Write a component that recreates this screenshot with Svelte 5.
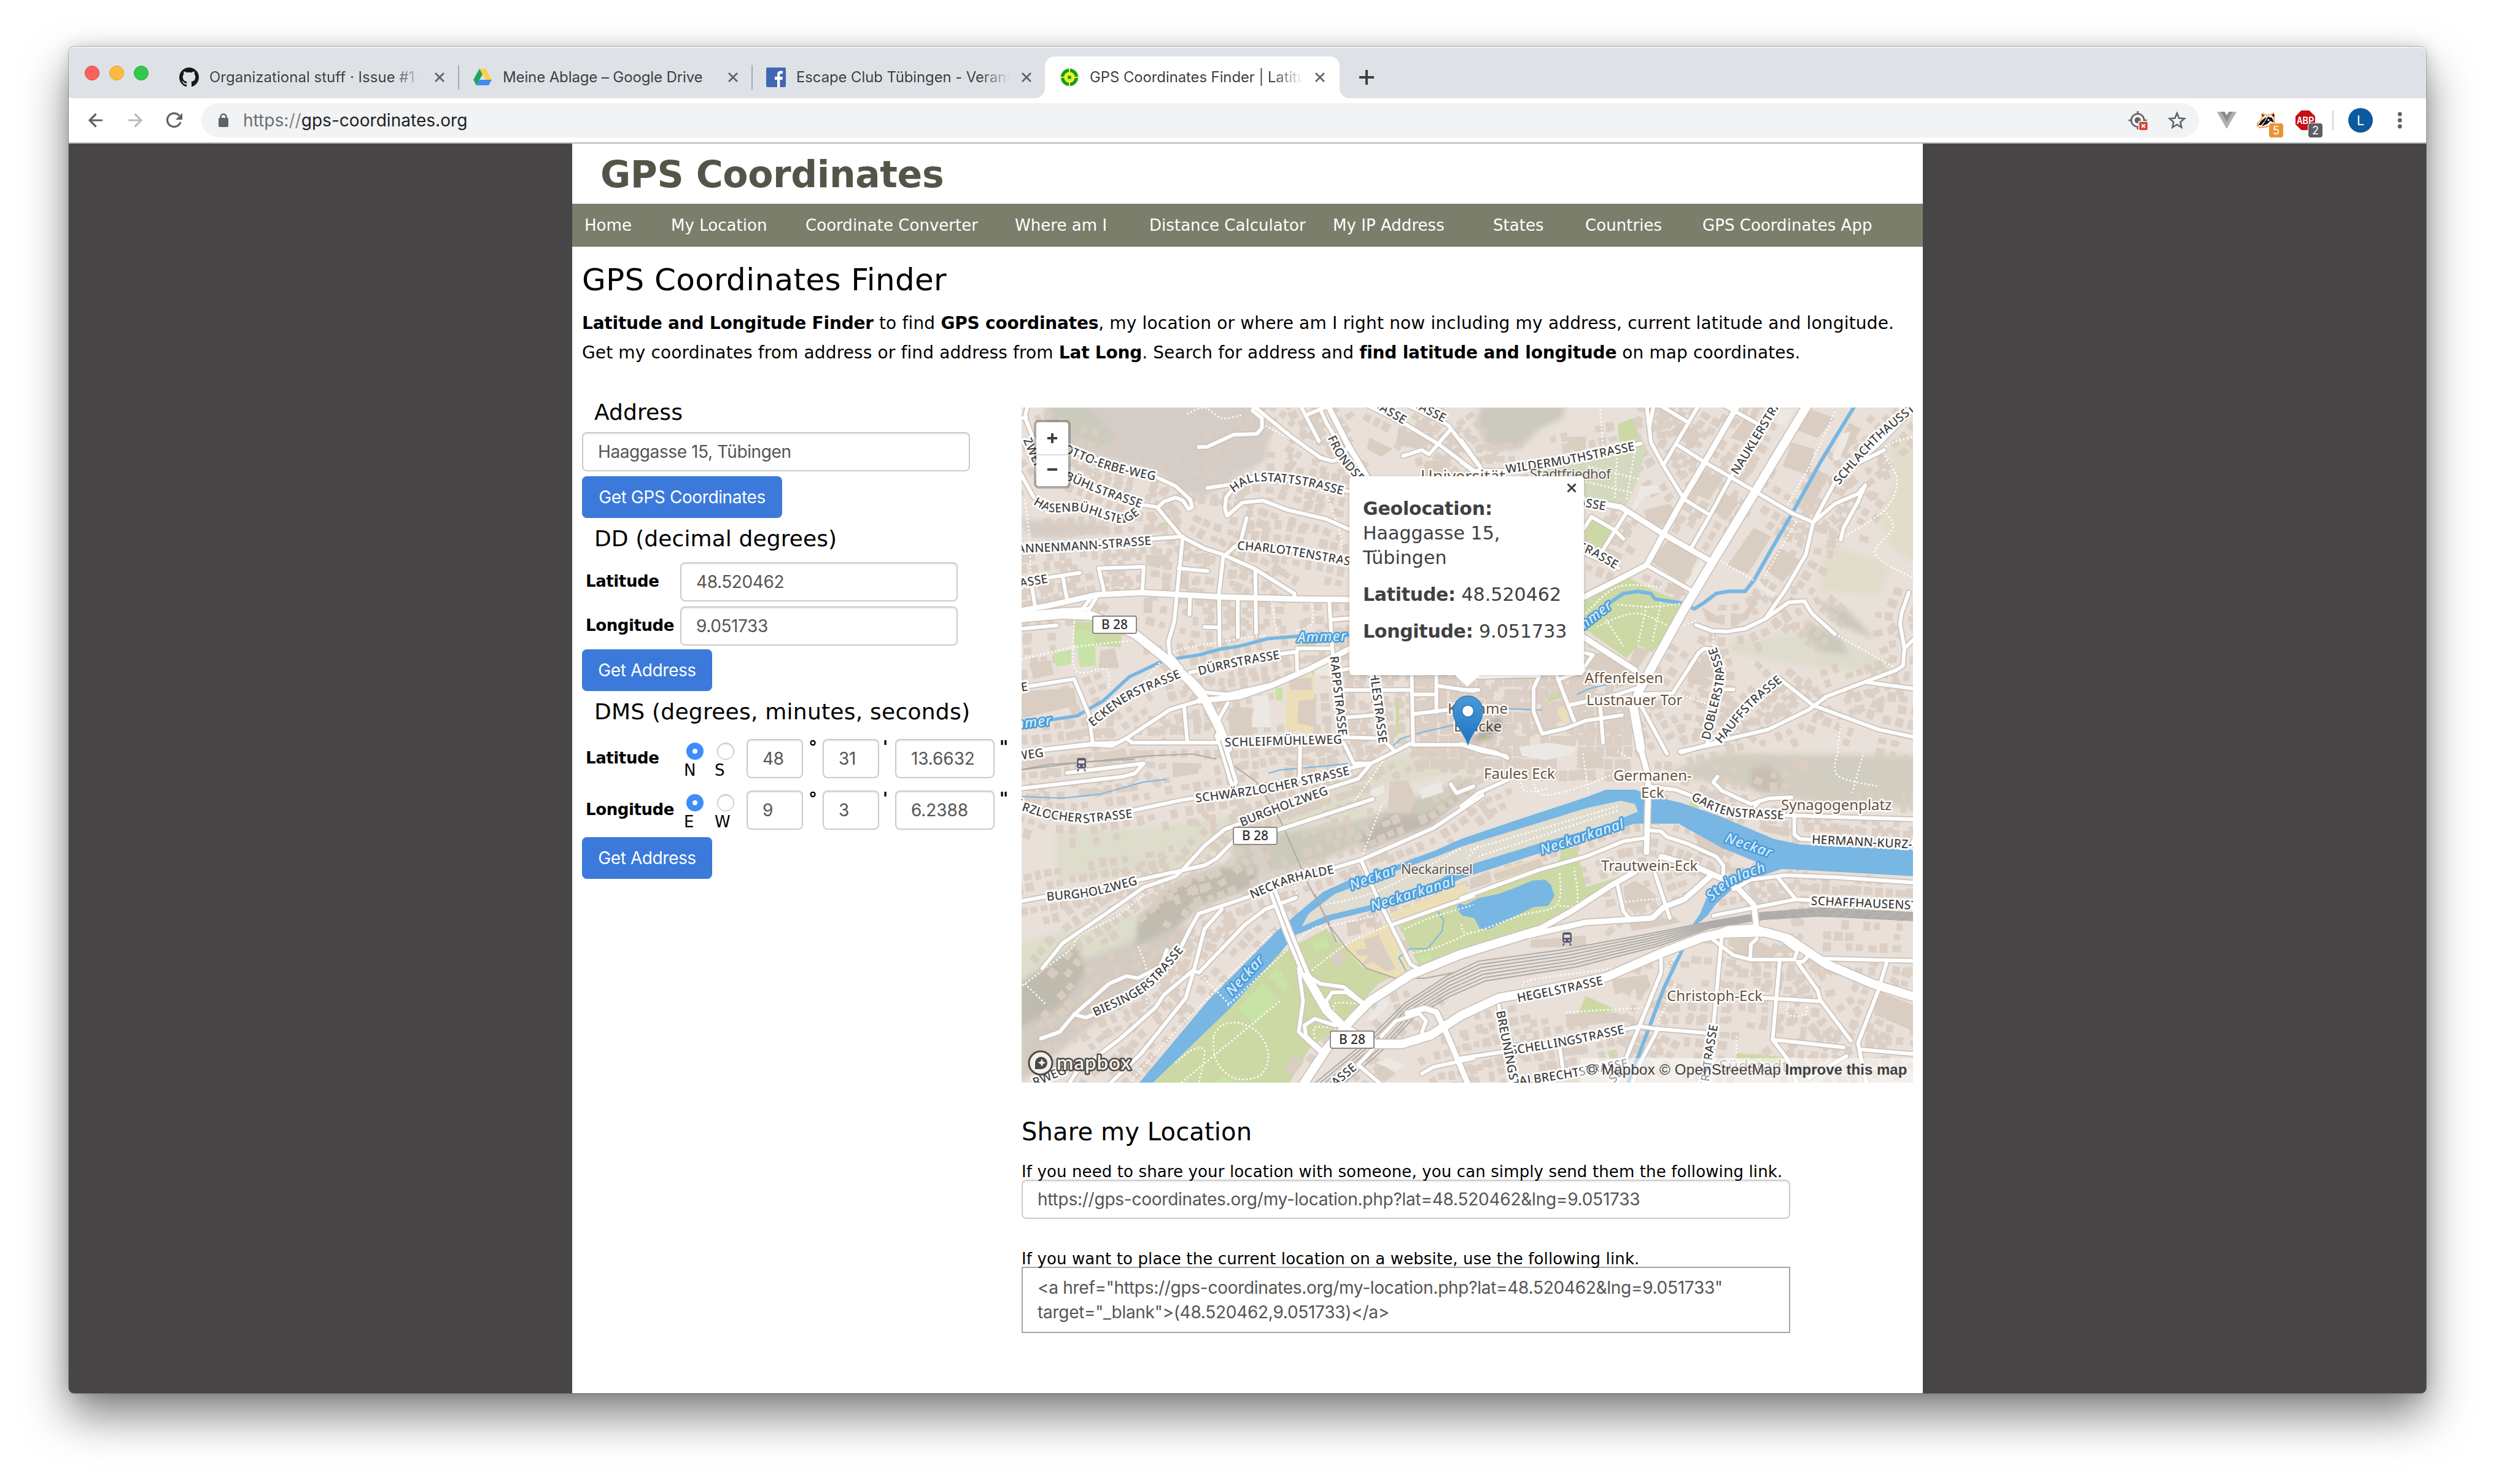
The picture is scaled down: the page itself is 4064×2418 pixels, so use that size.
<script>
  // ---------- browser chrome ----------
  const tabs = [
    { icon: 'github', title: 'Organizational stuff · Issue #1 · Lab', spaced: true },
    { icon: 'drive', title: 'Meine Ablage – Google Drive', whole: true },
    { icon: 'facebook', title: 'Escape Club Tübingen - Veranstaltungen' },
    { icon: 'gps', title: 'GPS Coordinates Finder | Latitude', active: true },
  ];
  const nav = [
    'Home', 'My Location', 'Coordinate Converter', 'Where am I', 'Distance Calculator',
    'My IP Address', 'States', 'Countries', 'GPS Coordinates App',
  ];
  const dms = [
    { label: 'Latitude', on: 'N', off: 'S', d: '48', m: '31', s: '13.6632' },
    { label: 'Longitude', on: 'E', off: 'W', d: '9', m: '3', s: '6.2388' },
  ];

  // ---------- map geometry ----------
  // Shapes are stored per map sheet (A-D); a leading letter selects the sheet
  // whose local grid the following points use.
  const W = 1452, H = 1100;
  const sheets = { A: [-4, -4], B: [716, -4], C: [-4, 546], D: [716, 546] };
  const project = (src) => {
    let o = sheets.A;
    const out = [];
    for (const tok of src.trim().split(/\s+/)) {
      if (sheets[tok]) { o = sheets[tok]; continue; }
      const [x, y] = tok.split(',').map(Number);
      out.push([+(x / 2.119 + o[0]).toFixed(1), +(y / 2.8 + o[1]).toFixed(1)]);
    }
    return out;
  };
  const line = (src) => 'M' + project(src).map((p) => p.join(' ')).join('L');
  const smooth = (p) => {
    let d = `M${p[0][0]} ${p[0][1]}`;
    for (let i = 0; i < p.length - 1; i++) {
      const a = p[i - 1] || p[i], b = p[i], c = p[i + 1], e = p[i + 2] || c;
      d += `C${b[0] + (c[0] - a[0]) / 6} ${b[1] + (c[1] - a[1]) / 6} ${c[0] - (e[0] - b[0]) / 6} ${c[1] - (e[1] - b[1]) / 6} ${c[0]} ${c[1]}`;
    }
    return d;
  };
  const curve = (src) => smooth(project(src));
  // Label baselines run on 40 units past both ends so no letter drops off.
  const baseline = (src) => {
    const p = project(src);
    const past = (a, b) => {
      const l = Math.hypot(a[0] - b[0], a[1] - b[1]);
      return [a[0] + ((a[0] - b[0]) / l) * 40, a[1] + ((a[1] - b[1]) / l) * 40];
    };
    const n = p.length;
    return `M${past(p[0], p[1]).join(' ')}L` + smooth(p).slice(1) + `L${past(p[n - 1], p[n - 2]).join(' ')}`;
  };

  const hills = [
    ['#d4ccc6', 'A 230,0 800,0 870,100 850,250 800,290 640,420 560,400 480,310 180,200 90,130 90,0'],
    ['#cbcbbd', 'A 90,0 230,0 330,140 290,190 130,120'],
    ['#d4ccc6', 'A 0,520 100,530 300,540 320,580 100,610 30,590'],
    ['#ccc9be', 'B 70,0 360,0 350,60 270,110 200,200 90,190 50,90'],
    ['#e2dccb', 'B 1600,130 1470,160 1500,350 1440,500 1480,640 1600,760'],
    ['#e2dccb', 'B 1260,640 1480,720 1450,860 1240,850'],
    ['#dedccc', 'B 930,1080 1200,1040 1290,1060 1500,1190 1450,1220 1180,1190 930,1130'],
    ['#cbc9bc', 'B 1230,890 1330,930 1430,1070 1300,1000'],
    ['#cbc9bc', 'B 1190,980 1310,1060 1340,1135 1250,1130 1190,1060'],
    ['#dedccb', 'C 130,400 420,390 860,320 1300,60 1568,30 1568,120 1270,200 1180,330 740,440 600,560 400,600 130,630'],
    ['#cbcabb', 'C 740,440 860,420 1180,350 1568,150 1568,240 1180,460 1000,560 850,600 740,560'],
    ['#c0b9b0', 'C 1180,430 1270,330 1400,330 1600,180 1420,380 1180,500'],
    ['#ddddca', 'C 0,920 400,770 400,930 100,1080 0,1120'],
    ['#d3cbc2', 'C 0,1100 400,900 590,830 560,960 300,1240 100,1450 0,1551'],
    ['#c0bdb0', 'C 540,640 700,560 820,580 830,650 620,750 550,840 400,930 410,800'],
    ['#bfbcaf', 'C 0,1100 200,920 230,1050 150,1200 0,1300'],
    ['#d1cdc0', 'D 670,150 900,50 1600,60 1600,300 1200,270 900,180'],
    ['#c9beb4', 'D 1000,120 1060,105 1105,160 1095,220 1050,235 1000,210'],
  ];
  const greens = [
    ['#cdd9a5', 'A 190,990 255,990 355,1040 350,1105 190,1090'],
    ['#c7e4a6', 'A 190,1030 260,1030 265,1190 210,1195'],
    ['#c7e4a6', 'A 115,1135 180,1115 180,1180 130,1195'],
    ['#c7e4a6', 'A 885,1290 910,1290 910,1350 885,1345'],
    ['#cdd9a5', 'A 735,660 748,695 715,685'],
    ['#cdd9a5', 'A 480,545 500,535 512,548'],
    ['#cdd9a5', 'A 965,1080 1025,1085 1025,1102 965,1100'],
    ['#cdd9a5', 'A 1300,1335 1312,1335 1310,1500 1300,1500'],
    ['#ecdfb7', 'A 930,1230 1020,1230 1015,1500 990,1490 920,1480 920,1400'],
    ['#d3dabf', 'B 200,300 640,180 610,340 570,460 425,430 425,330'],
    ['#cdd9a5', 'B 540,90 590,60 610,155 545,165'],
    ['#cdd9a5', 'B 425,890 575,785 670,850 770,900 740,990 660,1130 610,1095 570,1155 425,1020'],
    ['#cdd9a5', 'B 450,515 520,570 480,660 425,600'],
    ['#cdd9a5', 'B 295,1330 345,1310 350,1335 300,1355'],
    ['#cdd9a5', 'B 70,1505 95,1510 92,1535 70,1530'],
    ['#ecdfb7', 'B 330,1385 355,1375 375,1440 350,1455'],
    ['#cdd9a5', 'C 900,960 1060,850 1120,930 1200,1020 1300,1060 1240,1100 1130,1260 1000,1400 930,1560 440,1560 730,1210'],
    ['#cdd9a5', 'C 1310,830 1500,740 D 0,710 330,570 350,480 400,480 430,660 550,610 440,720 270,850 0,945 C 1380,1020'],
    ['#ecdfb7', 'C 1120,930 1270,825 1350,1040 1300,1075 1180,1020'],
    ['#ecdfb7', 'C 1280,780 1540,640 1550,700 1300,810'],
    ['#ecdfb7', 'D 110,590 280,520 290,560 120,640'],
    ['#c7e4a6', 'C 840,1100 895,1165 815,1285 755,1210'],
    ['#c7e4a6', 'C 885,1025 910,1050 910,1080 938,1110 915,1140 860,1065'],
    ['#c7e4a6', 'C 1010,910 1060,885 1070,930 1020,955'],
    ['#c7e4a6', 'C 1380,975 1415,960 1425,990 1390,1005'],
    ['#c7e4a6', 'C 705,1525 745,1560 670,1560'],
    ['#cdd9a5', 'D 430,1155 535,1220 480,1240 405,1235'],
    ['#cdd9a5', 'D 505,1410 525,1400 530,1440 515,1440'],
    ['#cdd9a5', 'D 950,1415 1110,1435 1100,1470 950,1440'],
    ['#cdd9a5', 'D 790,265 825,275 815,305 785,300'],
  ];
  const blocks = [
    'B 720,610 815,700 770,815 650,710', 'B 820,290 905,340 850,430 790,400', 'B 1140,170 1220,200 1200,320 1110,280',
    'B 1010,560 1070,600 990,770 920,730', 'B 890,390 960,440 920,520 860,480', 'B 630,480 720,450 740,490 690,560 640,520',
    'B 1210,20 1290,60 1230,150 1150,110', 'B 980,60 1050,100 1000,180 930,150', 'B 720,120 760,80 830,130 800,200',
    'B 1220,290 1270,320 1210,470 1170,430', 'B 1340,80 1380,110 1320,240 1290,200', 'B 1100,650 1170,710 1110,810 1050,750',
    'B 370,145 430,145 430,200 400,215 370,195', 'B 830,920 880,960 910,970 900,1000 850,985', 'B 1010,880 1025,900 985,975 970,960',
    'B 930,950 955,950 955,1010 930,1010', 'B 790,1170 850,1170 830,1280 780,1260', 'B 600,1100 650,1120 610,1200 580,1180',
    'B 430,1130 500,1130 580,1200 600,1250 430,1200', 'B 710,810 760,820 780,870 720,860',
    'A 1310,110 1400,140 1380,200 1300,180', 'A 1210,150 1290,200 1250,235 1200,200', 'A 1400,255 1470,255 1475,325 1395,325',
    'A 8,1305 190,1290 200,1370 8,1430', 'A 280,1120 330,1110 345,1200 275,1200', 'A 435,685 515,685 515,735 440,735',
    'A 560,765 585,765 585,840 560,840', 'A 725,1380 800,1380 805,1510 725,1510', 'A 935,1250 1010,1245 1010,1300 935,1300',
    'A 965,1350 1025,1340 1025,1470 960,1450', 'A 430,880 460,880 460,948 430,948', 'A 35,1180 110,1165 120,1230 50,1245',
    'C 1280,180 1340,170 1370,250 1350,320 1270,320', 'C 1190,900 1240,875 1265,950 1300,1030 1270,1045 1220,1000 1180,1020 1210,970 1165,970 1165,945 1200,940',
    'C 1130,820 1175,815 1180,870 1135,885', 'C 1195,800 1230,795 1230,840 1200,845', 'C 1100,945 1130,985 1100,1025 1070,980',
    'C 530,90 610,95 620,140 530,160', 'C 950,1425 985,1455 945,1520 915,1490', 'C 1250,1465 1300,1510 1260,1550 1225,1510',
    'D 1430,1130 1568,1200 1568,1320 1425,1240', 'D 920,900 990,890 1050,920 1090,950 1080,980 960,970',
    'D 360,1240 540,1230 570,1270 365,1300', 'D 520,1080 640,1060 655,1110 610,1180 600,1120 530,1150',
    'D 560,660 600,630 640,660 680,710 640,740 570,760', 'D 240,900 430,880 430,930 240,935', 'D 580,825 740,795 755,820 590,860',
    'D 810,410 920,460 900,540 820,510', 'D 30,620 100,590 105,640 30,670', 'D 110,600 270,530 285,560 120,630',
    'D 1040,370 1140,395 1130,430 1040,405', 'D 1200,150 1200,90 1150,60 1140,100', 'D 410,60 480,40 490,100 430,120',
  ];
  // Light squares, car parks and open halls.
  const plazas = [
    'B 1310,130 1345,120 1325,190 1300,255 1280,240', 'B 1025,790 1045,825 1090,860 1075,880 1018,825', 'B 830,700 860,720 800,840 775,815',
    'B 1100,20 1150,20 1120,95 1085,80', 'B 620,370 680,365 680,400 640,410 600,480 590,470', 'C 1380,210 1455,180 1465,225 1390,258',
    'C 1195,1270 1260,1160 1280,1190 1230,1260', 'D 200,20 300,0 400,20 380,60 290,80 210,60', 'C 1210,220 1260,190 1260,230 1220,255',
    'A 810,1330 860,1320 870,1470 805,1470', 'A 1020,1180 1070,1180 1075,1235 1020,1235', 'C 1230,1460 1270,1440 1330,1470 1300,1500',
  ];
  const water = [
    'C 410,1560 650,1180 890,860 960,780 1050,680 1150,620 1300,560 1440,490 D 0,440 200,350 430,250 500,215 600,215 680,250 760,275 900,340 1080,440 1170,465 1600,490 1600,612 1100,575 1030,550 900,480 750,370 600,370 400,450 0,620 C 1400,700 1220,765 1080,810 950,880 900,960 730,1210 455,1560',
    'D 15,740 60,710 130,690 200,655 245,630 290,625 310,650 322,700 300,745 250,750 190,790 140,820 100,850 65,850 45,800 5,790 -15,760 -10,735',
    'D 1100,540 1030,555 930,620 850,700 825,780 800,828 815,828 850,790 880,735 960,640 1110,575',
  ];
  const island = 'C 975,840 1000,780 1090,690 1250,610 1440,520 D 0,475 430,300 550,265 600,280 610,315 500,375 270,460 0,570 C 1400,660 1200,745 1060,790';
  const streams = [
    [5.5, 'A 0,1450 115,1435 200,1418 290,1350 380,1240 500,1165 620,1140 700,1112 760,1100 860,1065 960,1055 1140,1050'],
    [6, 'B 1360,0 1240,260 1140,500 1070,660 1010,800 980,850 920,850 880,860 840,900 805,930 770,905 670,885 655,860 610,850 560,860 525,890 425,1000'],
    [6, 'D 765,940 700,1120 575,1560'],
    [2, 'C 0,245 150,253 280,235 430,180 510,168'],
    [2, 'C 860,140 900,125 1050,108 1135,95'],
    [2, 'A 1290,1555 1320,1520 1400,1490 1500,1460'],
    [2, 'B 160,1385 280,1392'],
    [2, 'B 400,1320 440,1295 500,1275'],
    [2, 'C 1335,1040 1310,980 1350,940 1410,940 1460,860 1465,810 1440,760'],
  ];
  const rails = [
    'C 740,105 820,180 900,350 1000,650 1080,850 1130,940 1200,1030 1300,1075 1400,1075 1500,1050',
    'C 0,125 250,85 450,60 600,52 680,75', 'C 0,125 100,100 400,75', 'C 1020,690 1095,910',
    ...Array.from({ length: 7 }, (_, i) =>
      `C ${1015 + i * 17},1560 ${1200 + i * 11},${1360 + i * 5} ${1330 + i * 6},${1190 + i * 10} ${1480 + i},${1062 + i * 16} D ${60 + i * 4},${997 + i * 15} ${350 + i * 8},${945 + i * 13} ${650 + i * 6},${872 + i * 9} 860,${816 + i * 5} 1040,${776 + i * 5} 1240,${755 + i * 6} 1600,${778 + i * 6}`),
  ];
  // width class: 2 street, 3 through road, 4 trunk road
  const roads = [
    [2, 'A 30,0 20,55 45,140 90,230'], [2, 'A 0,300 50,420'], [2, 'A 0,60 25,58'],
    [2, 'A 620,192 650,190 740,135 820,132 838,105 838,60 805,25 815,0'],
    [2, 'A 805,0 940,145 1040,240 1080,255 1110,245 1130,200'],
    [3, 'A 1065,0 1130,170 1200,325 1240,420'],
    [2, 'A 970,0 1035,165'], [2, 'A 990,45 1055,12'], [2, 'A 1040,20 1060,80 1130,230'],
    [2, 'A 1200,0 1330,85 1450,180 1600,330'], [2, 'A 1340,0 1480,90 1600,300'], [2, 'A 1490,110 1415,225 1390,205 1325,232'],
    [2, 'A 100,170 180,210 460,320 540,370 590,430 598,465 585,475 565,435 540,422 500,440 480,465'],
    [2, 'A 170,320 400,450 475,465 560,600 640,655 700,680 810,745 950,860 952,885'],
    [2, 'A 0,650 440,612 565,600 545,860 535,990 515,1080 520,1140 560,1200'],
    [2, 'A 650,378 740,360 800,330 900,335 1100,385 1140,395'],
    [2, 'A 745,370 715,420 710,470 718,505 770,445 840,435 930,480 1060,520 1160,580'],
    [2, 'A 785,515 765,620'], [2, 'A 710,685 750,640 900,655 1160,715'],
    [2, 'A 705,685 690,860 692,1095'], [2, 'A 815,750 818,1040'], [2, 'A 755,880 755,1060'], [2, 'A 590,870 588,955'], [2, 'A 640,1012 690,1015'],
    [3, 'A 0,940 100,915 270,865 420,855 690,875 950,885 1160,888'],
    [2, 'A 275,745 430,738 425,855'], [2, 'A 275,745 295,860'], [2, 'A 550,745 650,757'],
    [2, 'A 0,808 210,765'], [2, 'A 45,835 55,920'], [2, 'A 150,780 165,885'],
    [2, 'A 270,870 240,935'], [2, 'A 255,870 215,935'],
    [2, 'A 0,1022 130,1005'], [2, 'A 590,1220 900,1135 960,1125'], [2, 'A 960,1110 1080,1110'], [2, 'A 958,1130 960,1215'],
    [2, 'A 0,1290 190,1250 240,1410 255,1550'], [2, 'A 0,1585 250,1550 320,1555 370,1520 520,1390 620,1350'],
    [2, 'A 370,1520 390,1540 720,1540'], [2, 'A 570,1385 580,1530'], [2, 'A 690,1500 690,1430 720,1360'],
    [2, 'A 1070,890 1080,1100 1110,1510'], [2, 'A 1075,980 1160,970'], [2, 'A 1120,1300 1355,1300'], [2, 'A 1130,1425 1220,1415'],
    [2, 'A 720,1540 1110,1515 1250,1520 1290,1570'], [2, 'A 1215,1235 1250,1520'], [2, 'A 1355,1235 1360,1550 1530,1550 1600,1580 1680,1600'],
    [2, 'A 1440,1235 1440,1400'], [2, 'A 1355,1320 1440,1320'], [2, 'A 1360,1410 1480,1390'], [2, 'A 1440,1280 1568,1305'], [2, 'A 1110,1210 1150,1200'],
    [3, 'A 620,1350 760,1330 870,1280 1000,1205 1160,1100'], [2, 'A 590,1240 640,1310 720,1320 870,1275'],
    [4, 'A 0,972 150,955 250,960 330,1005 400,1045 500,1150 590,1260 640,1340 690,1470 720,1568'],
    [2, 'A 0,955 150,935 240,930'],
    [2, 'B 640,0 655,170 700,280 770,430 850,495'], [2, 'B 665,0 650,100'], [2, 'B 685,0 785,80'], [2, 'B 820,0 700,270'],
    [2, 'B 745,180 840,260 1010,390 1145,495 1215,535'], [2, 'B 1080,0 930,330 860,500 795,650'], [2, 'B 905,0 1030,90'],
    [3, 'B 955,0 850,240 765,430 700,585 640,730 560,785 380,905'],
    [3, 'B 700,590 865,715'], [4, 'B 1195,0 1015,395 870,710 770,930 615,1300 595,1380 620,1568'],
    [2, 'B 1568,10 1440,180 1290,350 1215,535 1190,680 1120,840 1050,975 980,1020 920,1033 865,1030 810,1003'],
    [2, 'B 1050,975 1130,900 1185,895 1210,950 1290,1045'], [2, 'B 1215,535 1290,450 1370,405 1395,365 1370,440 1320,560 1310,615'],
    [2, 'B 1370,265 1460,205'], [2, 'B 0,160 65,280'], [2, 'B 0,260 40,300 160,300 400,245 620,175'],
    [3, 'B 400,430 550,465 575,485 700,590'], [2, 'B 450,510 530,570 560,610'], [2, 'B 450,510 410,590'], [2, 'B 575,480 485,670'], [2, 'B 400,660 545,745'],
    [2, 'B 640,730 800,850'], [3, 'B 400,1040 600,1210'], [2, 'B 425,1130 455,1140 425,1195'],
    [2, 'B 60,1240 200,1235 270,1235 250,1290 250,1400 280,1500 360,1475 430,1440 555,1415'], [2, 'B 330,1235 390,1440'],
    [2, 'B 370,1370 540,1320 610,1290'], [2, 'B 340,1250 425,1210'], [2, 'B 480,1370 490,1540'], [2, 'B 0,1300 60,1300'],
    [2, 'B 620,1320 730,1315 820,1130 840,1110 870,1115 890,1200 880,1300 850,1540'], [2, 'B 905,1297 940,1297'], [2, 'B 620,1370 710,1590'],
    [2, 'B 760,1585 900,1530 1060,1480 1200,1390 1260,1330 1400,1260 1500,1210 1525,1190 1530,1110 1515,1000 1520,950 1545,855'],
    [2, 'B 880,1540 1095,1245 1215,1370 1440,1480 1600,1525'], [2, 'B 1400,1265 1600,1300'], [2, 'B 1530,1110 1600,1020'],
    [2, 'C 0,45 250,5 340,0'], [2, 'C 165,138 430,95 400,140 360,155 0,210'],
    [2, 'C 0,290 120,345 230,350 390,310 560,262 800,210 1130,120 1215,95 1290,45 1350,5'],
    [2, 'C 970,0 968,160'], [2, 'C 1120,0 1155,95 1215,95'],
    [2, 'C 1215,95 1170,165 1050,215 780,360 710,395 640,470 565,580 540,610 430,660 300,780 150,915 80,1030'],
    [2, 'C 1220,258 890,400 740,450 680,530 640,560 400,630 100,700 0,725'],
    [2, 'C 1600,240 1430,390 1180,535 1080,575 800,700 620,780 590,850 545,970 470,1090 330,1200 230,1255 190,1240'],
    [2, 'C 510,945 490,1020 410,1075 370,1065 310,1100 190,1240 140,1320 75,1350'],
    [2, 'C 700,760 640,850 605,1030 575,1165 420,1420 310,1560'], [2, 'C 955,708 850,760 780,830 620,1050 600,1040 500,1150 470,1210 350,1350 200,1500 170,1560'],
    [2, 'C 1180,535 1230,690 1350,1010 1380,1035'], [2, 'C 1290,830 1480,740 1568,700'],
    [2, 'C 990,1060 1040,1100 1120,1115 1190,1190'], [2, 'C 1190,1195 1130,1140 1080,1140 1060,1180 1075,1240 1120,1290'],
    [2, 'C 1090,1290 1020,1260 985,1290 990,1340 1050,1410'], [2, 'C 965,1030 980,1180 965,1320 1050,1425'],
    [2, 'C 1250,1340 1300,1270 1380,1235 1405,1270 1390,1320'], [3, 'C 1340,1235 1400,1212 1440,1230 1470,1310 1550,1560'], [2, 'C 1390,1510 1430,1480 1568,1440'],
    [2, 'C 1220,1400 1170,1470 1250,1560'], [2, 'C 1510,230 1568,200'], [2, 'C 1490,190 1510,230'],
    [4, 'C 740,180 700,0 690,-30'],
    [4, 'C 870,660 930,870 990,1060 1060,1220 1130,1310 1230,1375 1320,1375 1420,1335 D 0,1245 130,1165 300,1125 500,1070 700,955 830,890 900,870 1050,865 1130,895 1260,1010 1420,1100 1600,1175'],
    [4, 'C 980,1560 1060,1400 1150,1260 1210,1180 1350,1060 D 0,965 270,855'],
    [3, 'D 230,880 430,820 660,800 700,750 770,715 860,610'], [3, 'D 600,590 520,650 380,770 270,850'],
    [3, 'D 610,-20 645,150 645,250 640,500'], [2, 'D 0,290 60,230 160,170'], [2, 'D 0,5 120,45 160,70'],
    [2, 'D 650,200 740,215 800,245 870,290 1100,330 1600,352'], [2, 'D 1150,330 1150,420 1170,440 1600,475'],
    [2, 'D 885,155 870,180 900,220 1000,280 1060,255 1140,250'], [2, 'D 755,40 900,0'], [2, 'D 1015,290 1030,265'],
    [2, 'D 650,400 690,405 710,430 780,460 880,520 905,560 905,620'], [3, 'D 690,520 800,560 900,620 960,670 1010,740 1020,850'],
    [2, 'D 635,435 560,450 430,520 270,580 0,710'], [2, 'D 670,600 720,800'], [2, 'D 540,650 560,770 580,800'],
    [2, 'D 940,670 1000,625 1120,605 1300,615 1600,642'], [2, 'D 1090,610 1155,715 1040,745 870,790'], [2, 'D 1155,715 1600,745'],
    [3, 'D 830,895 920,850 1010,842 1100,880'],
    [2, 'D 870,900 940,970 1000,990 1150,990 1160,950 1100,890'], [2, 'D 1020,895 1000,920 998,985'], [2, 'D 1200,970 1180,1000 1160,1000 1230,1130 1240,1175 1345,1360'],
    [2, 'D 1240,985 1600,997'], [2, 'D 1470,995 1440,1130 1370,1370 1380,1440 1400,1560'], [2, 'D 1100,990 1075,1355 1320,1390'],
    [2, 'D 1075,1355 1130,1450 1160,1560'], [2, 'D 900,880 870,1300 850,1560'], [2, 'D 870,1150 1240,1180'], [2, 'D 1380,1400 1600,1425'], [2, 'D 1330,1430 1200,1530'],
    [2, 'D 690,985 690,1050 560,1470'], [2, 'D 0,1440 200,1400 550,1310 620,1295 670,1305 850,1325'], [2, 'D 680,1305 610,1480 590,1560'],
    [2, 'D 340,1390 350,1480'], [2, 'D 130,1200 190,1560'],
  ];
  const dotted = [
    'A 850,95 950,165', 'A 580,40 640,12 700,60 770,45', 'A 8,1160 190,1105 390,1075', 'A 190,990 195,1210 300,1205 310,1300', 'A 430,1260 530,1130 700,1080 850,1050',
    'A 20,430 35,600 40,800', 'A 870,880 890,1050', 'A 1010,900 1010,1000 950,1030', 'A 1060,400 1110,600 1110,720',
    'B 480,20 490,200', 'B 540,190 530,430', 'B 600,200 570,440', 'B 430,350 590,400', 'B 440,280 620,340', 'B 430,950 540,830 690,830', 'B 540,910 650,920 770,905', 'B 500,980 560,1100',
    'B 470,1010 600,950 720,1010', 'B 640,920 610,1090', 'B 690,900 660,1080', 'B 1290,30 1210,260 1120,470', 'B 1170,500 1040,800', 'B 1568,140 1460,200 1505,340 1460,480 1310,610', 'B 1460,480 1490,560 1430,680 1560,790', 'B 1290,1045 1500,1200',
    'B 870,690 1010,800', 'B 770,940 740,1010 820,980', 'B 870,1040 870,1110', 'B 740,1310 860,1370', 'B 1300,1568 1310,1450',
    'C 430,690 340,790 210,880 180,940 90,1030 10,1110', 'C 1270,60 1150,280', 'C 1250,290 1180,530', 'C 950,650 960,700', 'C 620,1050 730,1200', 'C 720,1200 990,870 1050,850', 'C 880,860 560,1290 380,1551',
    'C 560,1551 900,1180', 'C 670,1340 700,1290 760,1280 830,1330 860,1430 830,1520 740,1530 680,1450 670,1340', 'C 540,1460 600,1400 640,1410 620,1551', 'C 1090,1240 1090,1190 1160,1190', 'C 1020,1350 1020,1300 1070,1300', 'C 1000,1050 1130,920 1280,830',
    'C 1060,840 1230,790', 'C 1060,740 1250,670 1530,480', 'C 1330,850 1420,800 1568,740', 'C 1360,960 1450,930 1568,860', 'C 410,930 440,1040 440,1190', 'C 20,1100 90,1190',
    'D 30,490 540,290', 'D 60,520 540,310', 'D 20,530 60,470', 'D 0,830 30,870 200,790 330,740 340,590', 'D 340,745 400,730 390,570', 'D 1300,40 1300,150 1440,200', 'D 1390,40 1350,230',
    'D 210,1110 250,1080 530,1030', 'D 740,1100 585,1551', 'D 700,1050 750,960', 'D 360,1230 640,1210', 'D 1130,1180 1130,1240 1190,1240 1190,1180', 'D 1010,820 1240,960', 'D 540,730 690,710', 'D 240,900 220,870', 'D 950,1340 950,1420',
    'D 250,190 290,240 440,190 560,120', 'D 200,130 220,220 300,210', 'D 420,50 440,230', 'D 540,40 580,70',
  ];
  const labels = [
    ['st', 'ZWEHR', 'A 12,155 60,300', 1], ['st', 'OTTO-ERBE-WEG', 'A 158,218 300,292 460,342'], ['st', 'BÜHLSTRASSE', 'A 160,340 290,412 415,468'],
    ['st', 'HASENBÜHLSTEIGE', 'A 45,450 110,488 220,488 350,538 420,495'], ['st', 'ANNENMANN-STRASSE', 'A 0,675 230,660 450,638'], ['st', 'ASSE', 'A 5,832 100,810'], ['st', 'E', 'A 5,1308 35,1302'],
    ['st', 'HALLSTATTSTRASSE', 'A 745,395 815,350 960,362 1110,408'], ['st', 'CHARLOTTENSTRASSE', 'A 748,660 900,678 1165,738', 1], ['st', 'FRONDSBERG', 'A 1062,145 1105,250 1190,380', 1],
    ['st', 'TRASSE', 'A 1195,-15 1330,92'], ['st', 'TRASSE', 'A 1325,-15 1472,85'], ['st', 'ECKENERSTRASSE', 'A 258,1465 380,1345 555,1245'], ['st', 'DÜRRSTRASSE', 'A 625,1232 760,1190 897,1158'],
    ['st', 'RAPPSTRASSE', 'A 1073,1155 1088,1330 1102,1502'], ['st', 'ÜHLESTRASSE', 'A 1208,1195 1225,1370 1240,1530'], ['st', 'SCHLEIFMÜHLEWEG', 'A 715,1558 1110,1545'],
    ['st', 'WILDERMUTHSTRASSE', 'B 165,310 370,268 592,208'], ['st', 'STRASSE', 'B 340,445 485,478'], ['st', 'STRASSE', 'B 380,655 440,680 530,748'],
    ['st', 'NAUKLERSTRASSE', 'B 952,325 1020,180 1112,-20', 1], ['st', 'SCHLACHTHAUSSTRASSE', 'B 1302,370 1390,235 1470,130 1620,-30', 1],
    ['st', 'DOBLERSTRASSE', 'B 858,1532 885,1380 908,1235 880,1100'], ['st', 'HAUFFSTRASSE', 'B 898,1545 1000,1385 1108,1262'],
    ['st', 'EWEG', 'C -20,82 75,66'], ['st', 'ÄRZLOCHER', 'C -15,300 100,345 212,364'], ['st', 'STRASSE', 'C 222,368 392,342'], ['st', 'SCHWÄRZLOCHER STRASSE', 'C 618,272 870,225 1136,148'],
    ['st', 'BURGHOLZWEG', 'C 775,380 910,310 1062,238'], ['st', 'BURGHOLZWEG', 'C 100,722 250,700 406,648'], ['st', 'NECKARHALDE', 'C 810,710 940,640 1082,598'], ['st', 'BIESINGERSTRASSE', 'C 266,1248 440,1130 566,952'],
    ['st', 'RWEG', 'C 55,1570 165,1508'], ['st', 'ASSE', 'C 1090,1575 1170,1485'],
    ['st', 'GARTENSTRASSE', 'D 795,262 920,332 1110,350'], ['st', 'HERMANN-KURZ-STRASSE', 'D 1205,460 1720,494', 1], ['st', 'SCHAFFHAUSENSTRASSE', 'D 1203,740 1672,768', 1], ['st', 'HEGELSTRASSE', 'D 185,1187 340,1147 502,1100'],
    ['st', 'SCHELLINGSTRASSE', 'D 180,1422 370,1380 558,1328'], ['st', 'BREUNINGSTRASSE', 'D 120,1222 182,1640', 1], ['st', 'ALBRECHTSTRASSE', 'D 210,1562 380,1528 570,1482'], ['st', 'ERSTRASSE', 'D 852,1590 872,1400 888,1280'], ['st', 'SE', 'D 525,1560 562,1505'],
    ['wa', 'Ammer', 'A 957,1082 1145,1075', 1], ['wa', 'Ammer', 'A -60,1485 120,1458'], ['wa', 'Ammer', 'B 380,1070 535,912'], ['wa', 'Neckar', 'C 726,1172 858,980'], ['wa', 'Neckar', 'C 1145,675 1310,595'], ['wa', 'Neckarkanal', 'C 1210,772 1516,646'],
    ['wa', 'Neckarkanal', 'D 270,515 575,385'], ['wa', 'Neckar', 'D 902,450 1075,528'], ['wa', 'Steinlach', 'D 858,732 940,645 1062,582'],
  ];
  const places = [
    ['Universität', 650, 122, 'big'], ['Stadtfriedhof', 828, 116, 'grey'], ['Krumme', 694, 499, ''], ['Brücke', 704, 528, ''],
    ['Affenfelsen', 917, 449, ''], ['Lustnauer Tor', 920, 485, ''], ['Faules Eck', 753, 605, ''], ['Germanen-', 964, 608, ''], ['Eck', 1009, 636, ''],
    ['Trautwein-Eck', 944, 755, ''], ['Synagogenplatz', 1237, 656, ''], ['Neckarinsel', 618, 760, 'grey'], ['Christoph-Eck', 1051, 967, ''], ['Südstadt', 1136, 1083, 'faint'],
  ];
  const shields = [[115, 339], [344, 683], [502, 1015]];
  const stations = [[98, 582], [889, 866]];

  // Houses line both sides of every ordinary street.
  let seed = 7;
  const rnd = () => ((seed = (seed * 16807) % 2147483647) / 2147483647);
  const box = (x, y, a, w, h) => {
    const c = Math.cos(a), s = Math.sin(a);
    return 'M' + [[-w, -h], [w, -h], [w, h], [-w, h]]
      .map(([u, v]) => `${(x + (u * c - v * s) / 2).toFixed(1)} ${(y + (u * s + v * c) / 2).toFixed(1)}`).join('L') + 'Z';
  };
  let houses = '';
  for (const [cls, src] of roads) {
    if (cls !== 2) continue;
    const p = project(src);
    for (let i = 1; i < p.length; i++) {
      const [x0, y0] = p[i - 1], [x1, y1] = p[i];
      const len = Math.hypot(x1 - x0, y1 - y0), a = Math.atan2(y1 - y0, x1 - x0);
      for (let t = 10; t < len - 4; t += 16 + rnd() * 6)
        for (const side of [-1, 1])
          for (const row of [17, 36]) {
            if (rnd() < (row === 17 ? 0.14 : 0.5)) continue;
            const off = side * (row + rnd() * 3);
            houses += box(x0 + Math.cos(a) * t - Math.sin(a) * off, y0 + Math.sin(a) * t + Math.cos(a) * off, a, 9 + rnd() * 5, 9 + rnd() * 7);
          }
    }
  }
  // Old town: tightly packed plots.
  let oldTown = '';
  for (let y = 446; y < 628; y += 19)
    for (let x = 640; x < 990; x += 15)
      if (y < 612 - Math.max(0, 860 - x) * 0.16 && rnd() > 0.12) oldTown += box(x + rnd() * 4, y + rnd() * 3, 0.1 - rnd() * 0.25, 14, 17);

  const widths = { 2: 6, 3: 9, 4: 14 };
</script>

{#snippet close()}
  <svg class="close" viewBox="0 0 18 18"><path d="M2 2L16 16M16 2L2 16" /></svg>
{/snippet}

<div class="window">
  <div class="tabstrip">
    <div class="lights"><i class="red"></i><i class="yellow"></i><i class="green"></i></div>
    {#each tabs as tab, i}
      <div class="tab" class:active={tab.active} class:divided={i < 2}>
        {#if tab.icon === 'github'}
          <svg class="fav" viewBox="0 0 16 16"><path fill="#191717" d="M8 0C3.58 0 0 3.58 0 8c0 3.54 2.29 6.53 5.47 7.59.4.07.55-.17.55-.38 0-.19-.01-.82-.01-1.49-2.01.37-2.53-.49-2.69-.94-.09-.23-.48-.94-.82-1.13-.28-.15-.68-.52-.01-.53.63-.01 1.08.58 1.23.82.72 1.21 1.87.87 2.33.66.07-.52.28-.87.51-1.07-1.78-.2-3.64-.89-3.64-3.95 0-.87.31-1.59.82-2.15-.08-.2-.36-1.02.08-2.12 0 0 .67-.21 2.2.82.64-.18 1.32-.27 2-.27s1.36.09 2 .27c1.53-1.04 2.2-.82 2.2-.82.44 1.1.16 1.92.08 2.12.51.56.82 1.27.82 2.15 0 3.07-1.87 3.75-3.65 3.95.29.25.54.73.54 1.48 0 1.07-.01 1.93-.01 2.2 0 .21.15.46.55.38A8.01 8.01 0 0 0 16 8c0-4.42-3.58-8-8-8z" /></svg>
        {:else if tab.icon === 'drive'}
          <svg class="fav" viewBox="0 0 32 32"><path fill="#1da462" d="M11 2L1 20l5 9L16 11z" /><path fill="#ffcf48" d="M11 2h10l10 18H21z" /><path fill="#4688f4" d="M11 20h20l-5 9H6z" /></svg>
        {:else if tab.icon === 'facebook'}
          <svg class="fav" viewBox="0 0 32 32"><rect width="32" height="32" rx="2" fill="#4267b2" /><path fill="#fff" d="M18 32V20h-4v-5h4v-3.500c0-4 2.400-6 6-6 1.500 0 2.500.1 3 .2V10h-2.200c-2 0-2.500 1-2.500 2.400V15H27l-.7 5h-4v12z" /></svg>
        {:else}
          <svg class="fav" viewBox="0 0 32 32"><circle cx="16" cy="16" r="14" fill="#159b1c" /><circle cx="16" cy="16" r="15" fill="none" stroke="#8fc98f" stroke-dasharray="2 2" /><circle cx="16" cy="16" r="7" fill="none" stroke="#f6fb2c" stroke-width="3.500" /><path d="M16 2v28M2 16h28" stroke="#e9f526" stroke-width="2" /><circle cx="16" cy="16" r="5" fill="#f6fb2c" /><circle cx="16" cy="16" r="3" fill="#159b1c" /></svg>
        {/if}
        <span class="title" class:spaced={tab.spaced} class:whole={tab.whole}>{tab.title}</span>
        {@render close()}
      </div>
    {/each}
    <svg class="plus" viewBox="0 0 24 24"><path d="M12 0V24M0 12H24" /></svg>
  </div>

  <div class="toolbar">
    <div class="navicons">
      <svg viewBox="0 0 32 32"><path d="M27 16H7M16.500 5.500L6 16L16.500 26.500" /></svg>
      <svg class="off" viewBox="0 0 32 32"><path d="M5 16H25M15.500 5.500L26 16L15.500 26.500" /></svg>
      <svg viewBox="0 0 32 32"><path d="M26 19A11 11 0 1 1 24 8.500" /><path class="solid" d="M29 4V15H18z" /></svg>
    </div>
    <div class="omnibox">
      <svg viewBox="0 0 32 32"><rect x="8" y="12" width="16" height="15" rx="2" fill="#5f6368" /><path d="M11.500 13V10.500a4.500 4.500 0 0 1 9 0V13" fill="none" stroke="#5f6368" stroke-width="2.600" /></svg>
      <span class="url"><span>https:<em>//</em></span>gps-coordinates.org</span>
      <svg class="loc" viewBox="0 0 32 32"><g fill="none" stroke="#5f6368" stroke-width="2.600"><circle cx="16" cy="16" r="10.500" /><path d="M16 1V6M16 26v5M1 16H6M26 16h5" /></g><circle cx="16" cy="16" r="5" fill="#5f6368" /><rect x="17" y="17" width="16" height="16" rx="2" fill="#f1f3f4" /><rect x="18.500" y="18.500" width="13.500" height="13.500" rx="2" fill="#db4437" /><path d="M22.500 22.500l5.500 5.500m0-5.500l-5.500 5.500" stroke="#fff" stroke-width="2" /></svg>
      <svg viewBox="0 0 32 32"><path d="M16 4.500l3.400 8 8.700.8-6.600 5.700 2 8.500-7.500-4.500-7.500 4.500 2-8.500-6.600-5.700 8.700-.8z" fill="none" stroke="#5f6368" stroke-width="2.600" /></svg>
    </div>
    <div class="ext">
      <svg viewBox="0 0 32 32"><path d="M0 2H12.500L16 8L19.500 2H32L16 30z" fill="#b0b0b0" /><path d="M6.500 2h6L16 8l3.500-6h6L16 18.500z" fill="#8a8a8a" /></svg>
      <div class="extension">
        <svg viewBox="0 0 32 32"><path d="M10 11L9 6l3-1 4 3 8-1 4-3 2 4-1 5 1 8-8 4-8 2-8 1-4-3 0-4 5-5z" fill="#fff" stroke="#ef7f1a" stroke-width="1.400" stroke-linejoin="round" /><path d="M10 10l0-4 4 3zM25 8l4-3v6zM3 24l6-8 8-6-3 7-6 7zM9 26l6-9 4-7 7 2 3 8-6-3-5 5z" fill="#15110f" /><circle cx="20" cy="15.500" r="1.600" fill="#fff" /></svg>
        <b class="badge orange">5</b>
      </div>
      <div class="extension">
        <svg viewBox="0 0 32 32"><path d="M9.500 0h13L32 9.500v13L22.500 32h-13L0 22.500v-13z" fill="#c70d13" /><text class="abp" x="16" y="21.500" textLength="28" lengthAdjust="spacingAndGlyphs">ABP</text></svg>
        <b class="badge">2</b>
      </div>
      <i class="sep"></i>
      <span class="avatar">L</span>
      <svg class="dots" viewBox="0 0 8 30"><circle cx="4" cy="5" r="3.400" /><circle cx="4" cy="15" r="3.400" /><circle cx="4" cy="25" r="3.400" /></svg>
    </div>
  </div>

  <div class="viewport">
    <div class="page">
      <header><h1>GPS Coordinates</h1></header>
      <nav>{#each nav as item}<a href="#top">{item}</a>{/each}</nav>
      <main>
        <h2>GPS Coordinates Finder</h2>
        <p class="intro">
          <span class="l1"><b>Latitude and Longitude Finder</b> to find <b>GPS coordinates</b>, my location or where am I right now including my address, current latitude and longitude.</span>
          <span class="l2">Get my coordinates from address or find address from <b>Lat Long</b>. Search for address and <b>find latitude and longitude</b> on map coordinates.</span>
        </p>
        <div class="columns">
          <section class="forms">
            <h3>Address</h3>
            <div class="field address">Haaggasse 15, Tübingen</div>
            <button class="wide">Get GPS Coordinates</button>
            <h3 class="next">DD (decimal degrees)</h3>
            <div class="row first"><span class="name">Latitude</span><div class="field dd">48.520462</div></div>
            <div class="row second"><span class="name">Longitude</span><div class="field dd">9.051733</div></div>
            <button class="dd-button">Get Address</button>
            <h3 class="next long">DMS (degrees, minutes, seconds)</h3>
            {#each dms as r}
              <div class="row dms">
                <span class="name">{r.label}</span>
                <div class="option"><i class="radio on"></i><span>{r.on}</span></div>
                <div class="option"><i class="radio"></i><span>{r.off}</span></div>
                <div class="field small">{r.d}</div><b class="unit deg">°</b>
                <div class="field small">{r.m}</div><b class="unit min">'</b>
                <div class="field sec">{r.s}</div><b class="unit secs">"</b>
              </div>
            {/each}
            <button class="dms-button">Get Address</button>
          </section>

          <section class="right">
            <div class="map">
              <svg class="canvas" viewBox="0 0 {W} {H}">
                <defs><filter id="soft" x="-20%" y="-20%" width="140%" height="140%"><feGaussianBlur stdDeviation="5" /></filter>
                  <linearGradient id="pin" x1="0" y1="0" x2="0" y2="1"><stop offset="0" stop-color="#4a9ad4" /><stop offset="1" stop-color="#1f71c4" /></linearGradient>
                </defs>
                <rect width={W} height={H} fill="#e8e0d9" />
                <g filter="url(#soft)">
                  {#each hills as [c, s]}<path d={line(s) + 'Z'} fill={c} />{/each}
                </g>
                <path d={houses + oldTown} fill="#dacdc2" opacity=".9" />
                {#each greens as [c, s]}<path d={line(s) + 'Z'} fill={c} />{/each}
                {#each blocks as s}<path d={line(s) + 'Z'} fill="#dacdc2" />{/each}
                {#each plazas as s}<path d={line(s) + 'Z'} fill="#ece8e3" />{/each}
                {#each water as s}<path d={line(s) + 'Z'} fill="#78b6e3" />{/each}
                <path d={line(island) + 'Z'} fill="#e0dccf" />
                {#each streams as [w, s]}<path class="stream" d={line(s)} stroke-width={w} />{/each}
                {#each rails as s}<path class="rail" d={line(s)} />{/each}
                {#each dotted as s}<path class="dotted" d={curve(s)} />{/each}
                <path class="tunnel" d={line('C 742,190 830,520 872,670')} />
                {#each roads as [w, s]}<path class="casing" d={line(s)} stroke-width={widths[w] + 3.5} />{/each}
                {#each roads as [w, s]}<path class="road" d={line(s)} stroke-width={widths[w]} />{/each}
                <path class="median" d={line('C 870,660 930,870 985,1050')} />
                <path class="median" d={line('C 740,180 695,-10')} />
                {#each stations as [x, y]}
                  <g transform="translate({x - 9} {y - 11})"><rect x="1" width="15" height="17" rx="4" fill="#5a5a72" /><rect x="3.500" y="4" width="10" height="5" fill="#e8e0d8" /><circle cx="5" cy="13" r="1.300" fill="#fff" /><circle cx="12" cy="13" r="1.300" fill="#fff" /><path d="M4 18l-2 4M13 18l2 4" stroke="#5a5a72" stroke-width="2" /></g>
                {/each}
                {#each labels as [kind, text, s, from], i}
                  <path id="lb{i}" d={baseline(s)} fill="none" />
                  <text class={kind} class:from={from}><textPath href="#lb{i}" startOffset={from ? 42 : '50%'}>{text}</textPath></text>
                {/each}
                {#each places as [text, x, y, cls]}<text class="place {cls}" {x} {y}>{text}</text>{/each}
                {#each shields as [x, y]}
                  <rect x={x + 1} y={y + 1} width="71" height="28" rx="3" fill="#fff" stroke="#8f8a85" stroke-width="2" />
                  <text class="shield" x={x + 36.5} y={y + 22}>B 28</text>
                {/each}
                <g>
                  <circle cx="31" cy="1068" r="19" fill="#f3f1ee" stroke="#4c4945" stroke-width="3" />
                  <path d="M22 1078V1067a10 10 0 1 1 10 11z" fill="#4c4945" /><path d="M33 1061l2 4.500 4.500 2-4.500 2-2 4.500-2-4.500-4.500-2 4.500-2z" fill="#f3f1ee" />
                  <text class="brand" x="57" y="1079" textLength="121">mapbox</text>
                </g>
                <path d="M731 546l34-36q14-10 18 4q0 14-22 24z" fill="#000" opacity=".2" filter="url(#soft)" />
                <path d="M727 549C722 530 703 517 703 494a24 24 0 0 1 48 0c0 23-19 36-24 55z" fill="url(#pin)" stroke="#2f7fc0" stroke-width="1.500" />
                <circle cx="727" cy="494.500" r="10.500" fill="#2e7cbc" /><circle cx="727" cy="494.500" r="8.700" fill="#fff" />
              </svg>
              <div class="zoomer"><span><i></i><i class="v"></i></span><span><i></i></span></div>
              <div class="popup">
                <svg class="x" viewBox="0 0 16 16"><path d="M1.500 1.500L14.500 14.500M14.500 1.500L1.500 14.500" /></svg>
                <p><b class="g">Geolocation:</b><br />Haaggasse 15,<br />Tübingen</p>
                <p><b class="la">Latitude:</b> 48.520462</p>
                <p><b class="lo">Longitude:</b> 9.051733</p>
              </div>
              <div class="credit"><span>© Mapbox © OpenStreetMap</span> <b>Improve this map</b></div>
            </div>

            <h4>Share my Location</h4>
            <p class="note one">If you need to share your location with someone, you can simply send them the following link.</p>
            <div class="field link">https://gps-coordinates.org/my-location.php?lat=48.520462&amp;lng=9.051733</div>
            <p class="note two">If you want to place the current location on a website, use the following link.</p>
            <div class="code">&lt;a href="https://gps-coordinates.org/my-location.php?lat=48.520462&amp;lng=9.051733"<br />target="_blank"&gt;(48.520462,9.051733)&lt;/a&gt;</div>
          </section>
        </div>
      </main>
    </div>
  </div>
</div>

<style>
  :global(body) { background: #fff; overflow: hidden; }
  :global(#app) { box-sizing: border-box; width: 4064px; height: 2418px; padding: 76px 112px 148px; overflow: hidden; }
  * { box-sizing: border-box; }
  svg { display: block; flex: none; }

  .window { width: 3840px; height: 2194px; border-radius: 10px; display: flex; flex-direction: column; background: #fff; box-shadow: 0 0 0 1px rgba(0, 0, 0, 0.22), 0 36px 72px 0 rgba(0, 0, 0, 0.5), 0 0 24px rgba(0, 0, 0, 0.14); font-family: Inter, "Liberation Sans", sans-serif; }
  .tabstrip { height: 84px; flex: none; display: flex; align-items: flex-end; background: #dee1e6; border-radius: 10px 10px 0 0; box-shadow: inset 0 2px 1px #f0f2f4; }
  .lights { width: 156px; height: 68px; padding: 15px 0 0 26px; display: flex; gap: 16px; }
  .lights i { width: 24px; height: 24px; border-radius: 50%; }
  .red { background: #fc605c; border: 1px solid #e0443e; }
  .yellow { background: #fdbc40; border: 1px solid #dea034; }
  .green { background: #34c84a; border: 1px solid #27aa35; }
  .tab { position: relative; width: 478px; height: 68px; display: flex; align-items: center; padding-left: 24px; }
  .tab.divided::after { content: ''; flex: none; width: 2px; height: 40px; background: #a5a8ac; margin-left: 21px; }
  .tab.active { width: 480px; background: #fff; border-radius: 16px 16px 0 0; }
  .tab.active::before, .tab.active::after { content: ''; position: absolute; bottom: 0; width: 16px; height: 16px; }
  .tab.active::before { left: -16px; background: radial-gradient(circle at 0 0, transparent 15.5px, #fff 16px); }
  .tab.active::after { right: -16px; background: radial-gradient(circle at 16px 0, transparent 15.5px, #fff 16px); }
  .fav { width: 32px; height: 32px; }
  .title { flex: none; width: 348px; margin-left: 17px; font-size: 24px; line-height: 40px; letter-spacing: -0.12px; color: #3c4043; white-space: nowrap; overflow: hidden; -webkit-mask-image: linear-gradient(90deg, #000 86%, transparent); mask-image: linear-gradient(90deg, #000 86%, transparent); }
  .title.spaced { letter-spacing: 0.02px; }
  .title.whole { -webkit-mask-image: none; mask-image: none; }
  .close { width: 18px; height: 18px; margin-left: 18px; stroke: #5f6368; stroke-width: 2.8; }
  .plus { width: 24px; height: 24px; margin: 0 0 22px 32px; stroke: #3c4043; stroke-width: 4; }

  .toolbar { height: 74px; flex: none; display: flex; align-items: flex-start; padding: 8px 0 0 28px; background: #fff; border-bottom: 2px solid #b6b4b6; }
  .navicons { height: 56px; display: flex; align-items: center; gap: 32px; }
  .navicons svg { width: 32px; height: 32px; fill: none; stroke: #5f6368; stroke-width: 3.2; }
  .navicons .off { stroke: #babcbe; }
  .navicons .solid { fill: #5f6368; stroke: none; }
  .omnibox { width: 3254px; height: 56px; margin-left: 28px; padding: 0 20px; border-radius: 28px; background: #f1f3f4; display: flex; align-items: center; }
  .omnibox svg { width: 32px; height: 32px; overflow: visible; }
  .url { flex: 1; margin-left: 16px; font-size: 28px; line-height: 56px; letter-spacing: 0.04px; color: #202124; }
  .url span { color: #6a6e73; }
  .url em { font-style: normal; color: #80868b; }
  .omnibox .loc { margin-right: 32px; }
  .ext { height: 56px; display: flex; align-items: center; margin-left: 29px; }
  .ext svg { width: 32px; height: 32px; }
  .extension { position: relative; margin-left: 32px; }
  .badge { position: absolute; left: 20px; top: 20px; width: 25px; height: 25px; border-radius: 5px; border: 1px solid #fff; background: #5c5f61; color: #fff; font: 400 18px/24px Inter, sans-serif; text-align: center; }
  .badge.orange { background: #ec9235; }
  .abp { font: 700 16px "Liberation Sans", sans-serif; fill: #fff; text-anchor: middle; }
  .sep { width: 2px; height: 32px; margin: 0 24px 0 28px; background: #cfd1d4; }
  .avatar { width: 40px; height: 40px; border-radius: 50%; background: #0b5a9d; color: #fff; font-size: 22px; line-height: 40px; text-align: center; }
  .ext .dots { width: 8px; height: 30px; margin-left: 40px; fill: #5f6368; }

  .viewport { flex: 1; background: #474546; border-radius: 0 0 8px 8px; display: flex; justify-content: center; }
  .page { width: 2200px; background: #fff; color: #000; font-family: "DejaVu Sans", Verdana, sans-serif; }
  h1, h2, h3, h4, p { margin: 0; font-weight: 400; }
  header { height: 98px; padding: 20px 0 0 46px; }
  h1 { font-size: 60px; line-height: 60px; font-weight: 700; letter-spacing: -0.4px; color: #525547; }
  nav { height: 70px; padding-left: 20px; background: #7a7e6a; display: grid; grid-template-columns: 141px 219px 341px 219px 299px 261px 150px 191px 400px; font-size: 26px; line-height: 70px; letter-spacing: 0.04px; }
  nav a { color: #fff; text-decoration: none; white-space: nowrap; }
  main { padding: 24px 16px 0; }
  h2 { margin-left: 0; font-size: 50px; line-height: 60px; letter-spacing: 0.35px; }
  .intro { margin: 17px 0 -1px 0; font-size: 28px; line-height: 48px; white-space: nowrap; }
  .intro span { display: block; }
  .intro b { letter-spacing: -0.2px; }
  .intro .l1 { letter-spacing: 0.17px; }
  .intro .l2 { letter-spacing: 0.13px; }
  .columns { display: flex; }
  .forms { width: 716px; padding-top: 50px; flex: none; }
  h3 { padding-left: 20px; font-size: 36px; line-height: 48px; letter-spacing: 0.1px; }
  h3.next { margin-top: 10px; }
  h3.long { letter-spacing: 0.24px; }
  .field { height: 64px; border: 2px solid #ccc; border-radius: 8px; padding-left: 24px; background: #fff; box-shadow: inset 0 2px 2px rgba(0, 0, 0, 0.08); font: 28px/61px Inter, sans-serif; letter-spacing: -0.4px; color: #555; }
  .address { width: 632px; margin-top: 8px; }
  button { display: block; width: 212px; height: 68px; padding: 0; border: 0; border-radius: 8px; background: #3b79da; color: #fff; font: 28px/68px Inter, sans-serif; letter-spacing: -0.4px; }
  .wide { width: 326px; margin-top: 8px; }
  .dd-button { margin-top: 6px; }
  .dms-button { margin-top: 12px; }
  .row { display: flex; height: 64px; }
  .name { width: 160px; padding-left: 6px; font-size: 26px; font-weight: 700; line-height: 62px; letter-spacing: -0.4px; }
  .row.first { margin-top: 14px; }
  .row.second { margin-top: 8px; }
  .row.dms { margin-top: 20px; }
  .row.dms .name { width: 166px; }
  .dd { width: 452px; }
  .option { width: 50px; font-size: 26px; line-height: 26px; }
  .option + .option { width: 52px; }
  .radio { display: block; width: 28px; height: 28px; margin: 6px 0 4px 4px; border: 1px solid #aaa; border-radius: 50%; background: #fff; box-shadow: inset 0 2px 2px rgba(0, 0, 0, 0.12); }
  .radio.on { border: 10px solid #3f8cfb; box-shadow: none; }
  .option span { display: block; padding-left: 0; }
  .small { width: 92px; }
  .sec { width: 162px; letter-spacing: -0.1px; }
  .unit { font-size: 28px; line-height: 28px; text-align: center; }
  .deg { width: 32px; }
  .min { width: 26px; padding-right: 6px; }
  .secs { width: 24px; margin-left: 3px; }

  .right { padding-top: 66px; }
  .map { position: relative; width: 1452px; height: 1100px; overflow: hidden; }
  .canvas { width: 1452px; height: 1100px; }
  .stream { fill: none; stroke: #78b6e3; stroke-linejoin: round; }
  .rail { fill: none; stroke: #adaaa7; stroke-width: 2; }
  .dotted { fill: none; stroke: #fff; stroke-width: 2.6; stroke-dasharray: 2.6 3.6; }
  .casing { fill: none; stroke: #cbc3bb; stroke-linejoin: round; stroke-linecap: round; }
  .road { fill: none; stroke: #fff; stroke-linejoin: round; stroke-linecap: round; }
  .tunnel { fill: none; stroke: #d9d0c8; stroke-width: 16; opacity: 0.9; }
  .median { fill: none; stroke: #c9c1b9; stroke-width: 2; }
  .st, .wa, .place, .shield { font-family: "Noto Sans", sans-serif; paint-order: stroke; stroke-linejoin: round; stroke: #fff; }
  .st { font-size: 19.8px; font-weight: 500; text-anchor: middle; fill: #3f3f3f; stroke-width: 6px; }
  .wa { font-size: 23px; font-weight: 500; font-style: italic; letter-spacing: 1px; text-anchor: middle; fill: #d8ecfa; stroke: #4a9cda; stroke-width: 5px; }
  .from { text-anchor: start; }
  .place { font-size: 24px; fill: #67523d; stroke-width: 5px; }
  .place.big { font-size: 27px; }
  .place.grey { font-size: 22px; fill: #5a5552; stroke: #f2eee9; stroke-width: 4px; letter-spacing: -0.4px; }
  .place.faint { font-size: 27px; opacity: 0.6; }
  .shield { font-size: 21px; font-weight: 500; text-anchor: middle; fill: #2f2f2f; stroke: none; }
  .brand { font: 600 33px Lato, sans-serif; fill: #f3f1ee; stroke: #4c4945; stroke-width: 5px; paint-order: stroke; stroke-linejoin: round; }

  .zoomer { position: absolute; left: 20px; top: 20px; width: 60px; height: 112px; border: 4px solid rgba(0, 0, 0, 0.25); border-radius: 8px; background: #fff; background-clip: padding-box; display: grid; grid-template-rows: 52px 52px; }
  .zoomer span { display: grid; place-items: center; }
  .zoomer span + span { border-top: 2px solid #ddd; padding-bottom: 4px; }
  .zoomer i { grid-area: 1 / 1; width: 16px; height: 4px; background: #404040; }
  .zoomer .v { width: 4px; height: 16px; }

  .popup { position: absolute; left: 534px; top: 112px; width: 382px; height: 324px; padding: 33px 23px 0; border-radius: 6px; background: #fff; color: #404040; font-size: 30px; line-height: 40px; box-shadow: 0 2px 6px rgba(0, 0, 0, 0.18); }
  .popup::after { content: ''; position: absolute; left: 171px; top: 323px; width: 42px; height: 20px; background: #fff; clip-path: polygon(0 0, 100% 0, 50% 100%); }
  .popup p { white-space: nowrap; margin: 0 0 20px -1px; letter-spacing: 0.05px; }
  .popup .g { letter-spacing: -0.2px; }
  .popup .la, .popup .lo { letter-spacing: -0.3px; }
  .popup .x { position: absolute; left: 354px; top: 11px; width: 16px; height: 16px; stroke: #404040; stroke-width: 3; }
  .credit { position: absolute; right: 0; bottom: 0; width: 542px; height: 40px; padding-left: 10px; background: rgba(255, 255, 255, 0.5); color: #404040; font: 24px/38px "Liberation Sans", sans-serif; white-space: nowrap; }
  .credit span { letter-spacing: 0.28px; }

  h4 { margin-top: 56px; font-size: 40px; line-height: 48px; letter-spacing: 0.15px; }
  .note { font-size: 26px; line-height: 26px; letter-spacing: 0.12px; position: relative; }
  .note.one { margin-top: 28px; }
  .note.two { margin-top: 52px; }
  .link { width: 1252px; letter-spacing: -0.24px; }
  .code { width: 1252px; height: 108px; border: 2px solid #a6a6a6; padding: 12px 0 0 24px; font: 28px/40px Inter, sans-serif; letter-spacing: -0.28px; color: #555; }
</style>
